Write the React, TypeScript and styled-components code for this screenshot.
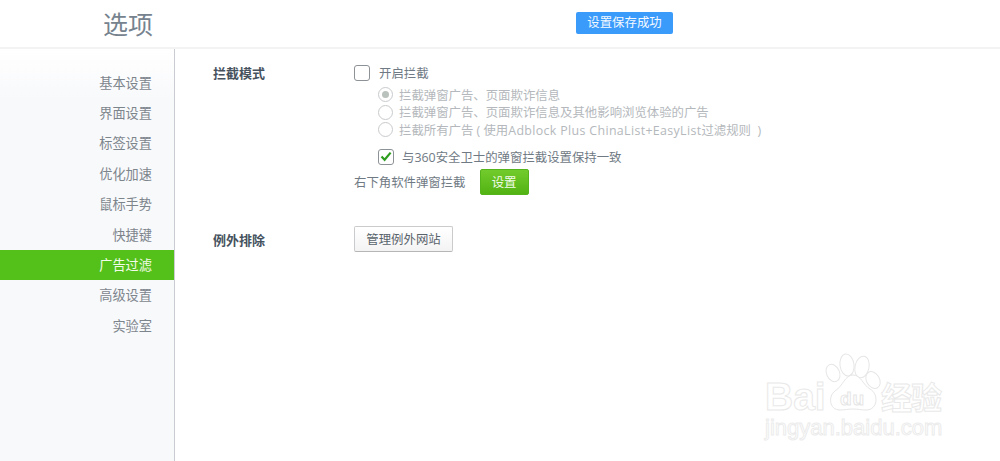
import React from "react";
import styled, { createGlobalStyle } from "styled-components";

const Global = createGlobalStyle`
  html, body { margin: 0; padding: 0; background: #fff; height: 100%; overflow: hidden; }
  body { font-family: "Open Sans", "Noto Sans CJK SC", sans-serif; }
`;

const Page = styled.div`
  position: relative;
  width: 1000px;
  height: 461px;
  display: flex;
  flex-direction: column;
  overflow: hidden;
`;

const Header = styled.header`
  flex: none;
  height: 47px;
  border-bottom: 2px solid #f3f3f4;
  display: flex;
  align-items: center;
  padding-left: 103px;
`;

const Title = styled.h1`
  margin: 0 0 2px;
  width: 473px;
  font-family: "Noto Sans CJK SC", sans-serif;
  font-size: 25px;
  line-height: 30px;
  font-weight: 400;
  color: #76838f;
`;

const Toast = styled.div`
  width: 97px;
  height: 22px;
  margin-top: -1px;
  border-radius: 2px;
  background: #3b9bfb;
  color: #f4f9ff;
  font-size: 12.4px;
  line-height: 22px;
  text-align: center;
`;

const Body = styled.div`
  flex: 1;
  display: flex;
  min-height: 0;
`;

const Sidebar = styled.nav`
  flex: none;
  width: 174px;
  padding-top: 18.6px;
  border-right: 1px solid #c9cdd1;
  background: linear-gradient(#ffffff 0, #f8f9fb 50px, #f8f9fb 100%);
`;

const NavItem = styled.div<{ $active?: boolean }>`
  height: 30.4px;
  padding-right: 22px;
  text-align: right;
  font-size: 13.2px;
  line-height: 30.4px;
  color: ${(p) => (p.$active ? "#f2fbe9" : "#7d858c")};
  background: ${(p) => (p.$active ? "#54c11a" : "transparent")};
`;

const Main = styled.main`
  flex: 1;
  padding: 15px 0 0 38px;
`;

const Section = styled.section`
  display: grid;
  grid-template-columns: 141px 1fr;
  margin-bottom: 31px;
`;

const Label = styled.h2<{ $offset: number }>`
  margin: 0;
  padding-top: ${(p) => p.$offset}px;
  font-size: 13px;
  line-height: 18px;
  font-weight: 700;
  color: #46525e;
`;

const Controls = styled.div`
  display: flex;
  flex-direction: column;
`;

const CheckRow = styled.div<{ $indent?: number; $gap: number; $top?: number }>`
  display: flex;
  align-items: center;
  height: 18px;
  margin-left: ${(p) => p.$indent ?? 0}px;
  margin-top: ${(p) => p.$top ?? 0}px;
  gap: ${(p) => p.$gap}px;
  font-size: 12.4px;
  color: #6f7a84;
`;

const CheckBox = styled.span`
  flex: none;
  box-sizing: border-box;
  width: 16px;
  height: 16px;
  border: 1.5px solid #8d9296;
  border-radius: 3px;
  background: #fff;
  display: flex;
  align-items: center;
  justify-content: center;
`;

const RadioList = styled.div`
  display: flex;
  flex-direction: column;
  margin: 4px 0 0 24px;
`;

const RadioRow = styled.div`
  display: flex;
  align-items: center;
  gap: 6px;
  height: 17.5px;
  font-size: 12.4px;
  color: #b4b8bc;
  white-space: pre;
`;

const RadioText = styled.span``;

const Latin = styled.span`
  letter-spacing: 0.35px;
`;

const Radio = styled.span<{ $on?: boolean }>`
  flex: none;
  box-sizing: border-box;
  width: 15px;
  height: 15px;
  border: 1px solid #c8cacc;
  border-radius: 50%;
  background: #fff;
  display: flex;
  align-items: center;
  justify-content: center;
  &::after {
    content: "";
    display: ${(p) => (p.$on ? "block" : "none")};
    width: 7px;
    height: 7px;
    border-radius: 50%;
    background: #b9c2bc;
  }
`;

const InlineRow = styled.div`
  display: flex;
  align-items: center;
  gap: 14px;
  margin-top: 3px;
  font-size: 12.4px;
  color: #6f7a84;
`;

const GreenButton = styled.button`
  width: 49px;
  height: 26px;
  padding: 0;
  border: 1px solid #55b31b;
  border-radius: 2px;
  background: linear-gradient(#72cb2c, #52b312);
  color: #f2fbe9;
  font: inherit;
`;

const GhostButton = styled.button`
  width: 99px;
  height: 26px;
  padding: 0;
  border: 1px solid #c9cbcd;
  border-bottom-color: #b4b6b8;
  border-radius: 2px;
  background: linear-gradient(#ffffff, #f3f3f3);
  color: #59636c;
  font-family: inherit;
  font-size: 12.4px;
`;

const Watermark = styled.div`
  position: absolute;
  left: 765px;
  top: 352px;
  width: 200px;
  height: 100px;
  pointer-events: none;
`;

const Paw = styled.svg`
  position: absolute;
  left: 60px;
  top: 0;
`;

const BaiMark = styled.span`
  position: absolute;
  left: 0;
  top: 22px;
  font-family: "Liberation Sans", sans-serif;
  font-size: 39px;
  font-weight: 700;
  line-height: 46px;
  color: #fff;
  -webkit-text-stroke: 1px #e9e9e9;
`;

const DuMark = styled.span`
  position: absolute;
  left: 75px;
  top: 36px;
  font-family: "Liberation Sans", sans-serif;
  font-size: 19px;
  font-weight: 700;
  line-height: 22px;
  letter-spacing: 1px;
  color: #fff;
  -webkit-text-stroke: 1px #e6e6e6;
`;

const JingMark = styled.span`
  position: absolute;
  left: 116px;
  top: 26px;
  font-family: "Noto Sans CJK SC", sans-serif;
  font-size: 31px;
  line-height: 36px;
  letter-spacing: -1px;
  font-weight: 700;
  white-space: nowrap;
  color: #fff;
  -webkit-text-stroke: 1px #e9e9e9;
`;

const UrlMark = styled.span`
  position: absolute;
  left: 0;
  top: 63px;
  font-family: "Liberation Sans", sans-serif;
  font-size: 22px;
  line-height: 26px;
  white-space: nowrap;
  color: #fff;
  -webkit-text-stroke: 1px #ececec;
`;

const items = ["基本设置", "界面设置", "标签设置", "优化加速", "鼠标手势", "快捷键", "广告过滤", "高级设置", "实验室"];

export default function App() {
  return (
    <Page>
      <Global />
      <Header>
        <Title>选项</Title>
        <Toast>设置保存成功</Toast>
      </Header>
      <Body>
        <Sidebar>
          {items.map((t) => (
            <NavItem key={t} $active={t === "广告过滤"}>{t}</NavItem>
          ))}
        </Sidebar>
        <Main>
          <Section>
            <Label $offset={0}>拦截模式</Label>
            <Controls>
              <CheckRow $gap={9}>
                <CheckBox />
                开启拦截
              </CheckRow>
              <RadioList>
                <RadioRow><Radio $on />拦截弹窗广告、页面欺诈信息</RadioRow>
                <RadioRow><Radio />拦截弹窗广告、页面欺诈信息及其他影响浏览体验的广告</RadioRow>
                <RadioRow>
                  <Radio />
                  <RadioText>拦截所有广告 ( 使用<Latin>Adblock Plus ChinaList+EasyList</Latin>过滤规则  )</RadioText>
                </RadioRow>
              </RadioList>
              <CheckRow $indent={24} $gap={8} $top={9}>
                <CheckBox>
                  <svg width="12" height="11" viewBox="0 0 12 11">
                    <path d="M1.5 5.5 L4.6 8.8 L10.6 1.6" fill="none" stroke="#2f9e1f" strokeWidth="2.2" />
                  </svg>
                </CheckBox>
                与360安全卫士的弹窗拦截设置保持一致
              </CheckRow>
              <InlineRow>
                右下角软件弹窗拦截
                <GreenButton>设置</GreenButton>
              </InlineRow>
            </Controls>
          </Section>
          <Section>
            <Label $offset={5}>例外排除</Label>
            <Controls>
              <div>
                <GhostButton>管理例外网站</GhostButton>
              </div>
            </Controls>
          </Section>
        </Main>
      </Body>
      <Watermark>
        <Paw width="60" height="62" viewBox="0 0 60 62" fill="#fff" stroke="#e6e6e6" strokeWidth="1">
          <ellipse cx="8" cy="21" rx="6.5" ry="9" transform="rotate(-25 8 21)" />
          <ellipse cx="22" cy="13" rx="7" ry="11" transform="rotate(-8 22 13)" />
          <ellipse cx="37" cy="15" rx="7" ry="11" transform="rotate(12 37 15)" />
          <ellipse cx="48" cy="28" rx="6.5" ry="9" transform="rotate(-30 48 28)" />
          <path d="M28 23 C36 23 38 33 45 37 C54 42 53 58 41 58 C36 58 33 57 28 57 C23 57 20 58 15 58 C4 58 3 44 10 39 C18 34 20 23 28 23 Z" />
        </Paw>
        <BaiMark>Bai</BaiMark>
        <DuMark>du</DuMark>
        <JingMark>经验</JingMark>
        <UrlMark>jingyan.baidu.com</UrlMark>
      </Watermark>
    </Page>
  );
}
